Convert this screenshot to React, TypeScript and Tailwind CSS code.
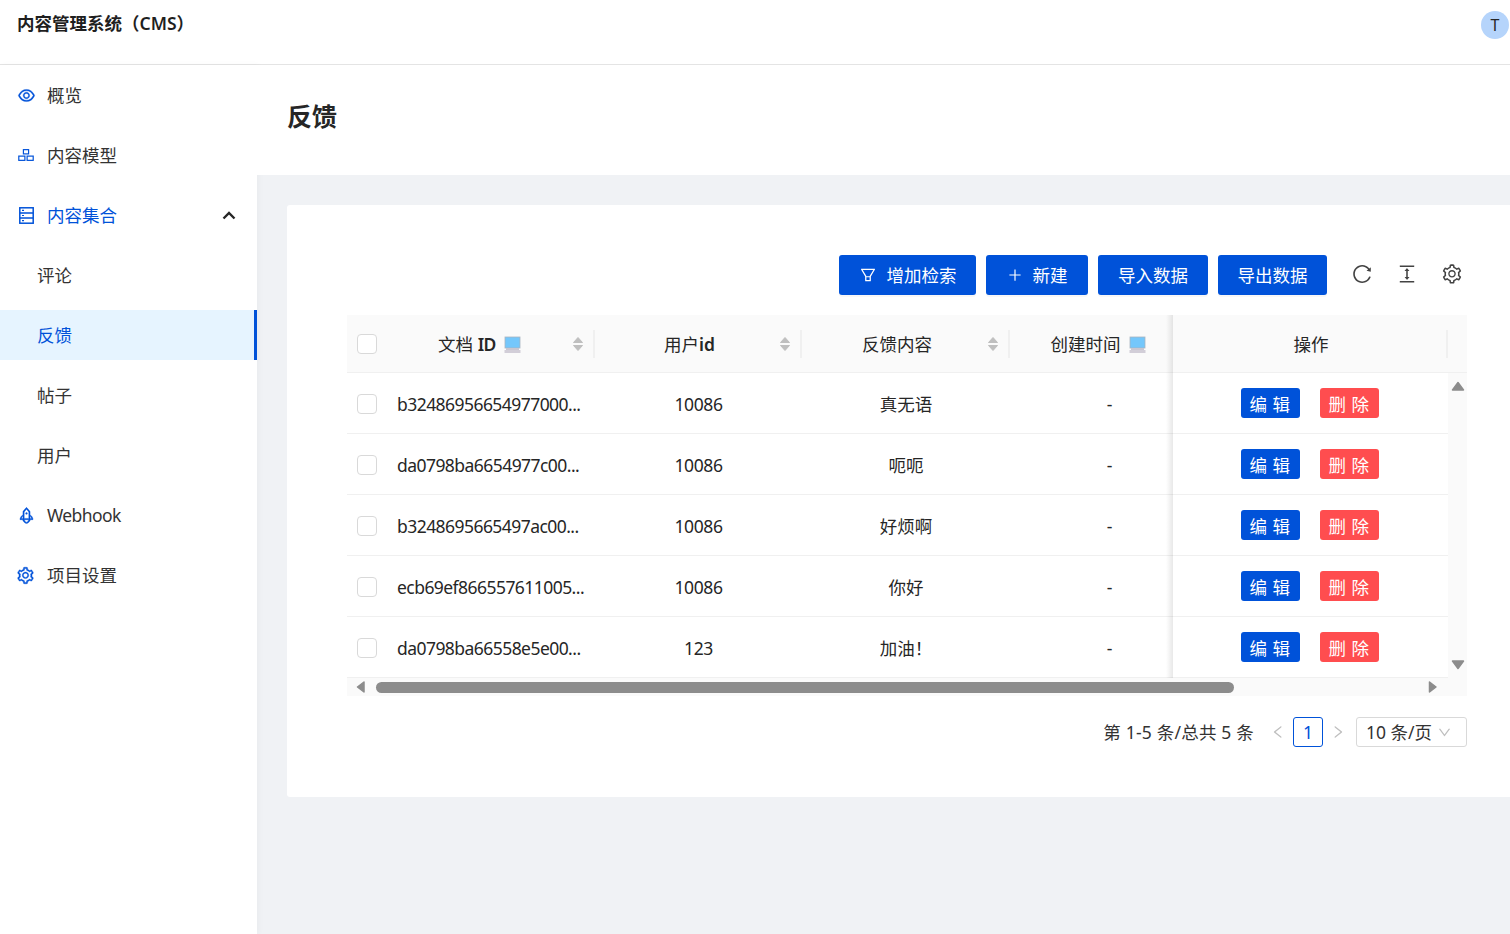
import {
  AiOutlineEye,
  AiOutlineRocket,
  AiOutlineSetting,
  AiOutlineDown,
  AiOutlineLeft,
  AiOutlineRight,
  AiOutlineFilter,
  AiOutlinePlus,
  AiOutlineReload,
  AiOutlineColumnHeight,
} from 'react-icons/ai';

const rows = [
  { id: 'b32486956654977000...', user: '10086', text: '真无语' },
  { id: 'da0798ba6654977c00...', user: '10086', text: '呃呃' },
  { id: 'b3248695665497ac00...', user: '10086', text: '好烦啊' },
  { id: 'ecb69ef866557611005...', user: '10086', text: '你好' },
  { id: 'da0798ba66558e5e00...', user: '123', text: '加油！' },
];

function Laptop() {
  return (
    <svg width="17" height="18" viewBox="0 0 17 18" className="shrink-0">
      <rect x="1" y="1" width="15" height="11" fill="#74c7fb" stroke="#a9b4c0" strokeWidth="0.8" />
      <rect x="2" y="12" width="13" height="2" fill="#c9c6d0" />
      <rect x="0.5" y="14" width="16" height="3" fill="#d2ced8" />
    </svg>
  );
}

function Sorter() {
  return (
    <svg width="12" height="16" viewBox="0 0 12 16" className="shrink-0">
      <path d="M6 1.5 L10.5 6.5 H1.5 Z" fill="#bfbfbf" stroke="#bfbfbf" strokeLinejoin="round" />
      <path d="M6 14.5 L10.5 9.5 H1.5 Z" fill="#bfbfbf" stroke="#bfbfbf" strokeLinejoin="round" />
    </svg>
  );
}

function Triangle({ dir, className }: { dir: 'up' | 'down' | 'left' | 'right'; className?: string }) {
  const d = {
    up: 'M7 1.5 L12.5 9 H1.5 Z',
    down: 'M7 9.5 L12.5 2 H1.5 Z',
    left: 'M2.5 7 L9 2 V12 Z',
    right: 'M9 7 L2.5 2 V12 Z',
  }[dir];
  const vertical = dir === 'up' || dir === 'down';
  return (
    <svg width={vertical ? 14 : 12} height={vertical ? 11 : 14} viewBox={vertical ? '0 0 14 11' : '0 0 12 14'} className={className}>
      <path d={d} fill="#8c8c8c" stroke="#8c8c8c" strokeWidth="1.5" strokeLinejoin="round" />
    </svg>
  );
}

function ModelIcon() {
  return (
    <svg width="16" height="12" viewBox="0 0 17 13" fill="none" stroke="#0052d9" strokeWidth="1.3" className="ml-[1px]">
      <rect x="5.7" y="0.7" width="5.6" height="4.6" />
      <rect x="0.7" y="7.7" width="6.6" height="4.6" />
      <rect x="9.7" y="7.7" width="6.6" height="4.6" />
    </svg>
  );
}

function CollectionIcon() {
  return (
    <svg width="15" height="17" viewBox="0 0 15 17" fill="none" stroke="#0052d9" strokeWidth="1.5" className="ml-[2px]">
      <rect x="0.8" y="0.8" width="13.4" height="15.4" />
      <path d="M1 6 H14 M1 11 H14" />
      <path d="M3 3.4 H5 M3 8.5 H5 M3 13.6 H5" strokeWidth="1.2" />
    </svg>
  );
}

function ChevronUp() {
  return (
    <svg width="14" height="9" viewBox="0 0 14 9" fill="none" stroke="#262626" strokeWidth="2.4" className="absolute right-[21px] top-[21px]">
      <path d="M1.5 7.5 L7 2 L12.5 7.5" />
    </svg>
  );
}

function Divider() {
  return <span className="w-[2px] h-[28px] bg-[#f0f0f0] shrink-0" />;
}

function Checkbox() {
  return <span className="block mt-[1px] w-[20px] h-[20px] rounded-[4px] border border-[#d9d9d9] bg-white" />;
}

function MenuItem({ icon, label, active, latin }: { icon: React.ReactNode; label: string; active?: boolean; latin?: boolean }) {
  return (
    <div className={`h-[50px] flex items-center pl-[17px] ${active ? 'text-[#0052d9]' : 'text-[#333]'}`}>
      <span className="w-[30px] flex items-center text-[#0052d9] text-[19px]">{icon}</span>
      <span className={`pt-[2px] ${latin ? 'tracking-[-0.6px]' : ''}`}>{label}</span>
    </div>
  );
}

function SubItem({ label, active }: { label: string; active?: boolean }) {
  return (
    <div
      className={`h-[50px] flex items-center pl-[37px] pt-[2px] ${
        active ? 'bg-[#e6f4ff] text-[#0052d9] border-r-[3px] border-[#0052d9]' : 'text-[#333]'
      }`}
    >
      {label}
    </div>
  );
}

function PrimaryButton({ className, children }: { className: string; children: React.ReactNode }) {
  return (
    <button className={`h-[40px] flex items-center justify-center gap-[10px] rounded-[3px] bg-[#0052d9] text-white shadow-[0_2px_0_rgba(0,0,0,0.03)] ${className}`}>
      {children}
    </button>
  );
}

export default function App() {
  return (
    <div
      className="h-screen overflow-hidden bg-[#f0f2f5] flex flex-col text-[17.5px] text-[#262626]"
      style={{ fontFamily: '"Noto Sans", "Noto Sans CJK SC", sans-serif' }}
    >
      <header className="h-[65px] shrink-0 bg-white border-b border-[#e4e4e4] flex justify-between pl-[17px] pr-[1px]">
        <div className="font-semibold leading-[46px] text-[#1f1f1f]">内容管理系统（CMS）</div>
        <div className="mt-[11px] w-[28px] h-[28px] rounded-full bg-[#b5d4fb] flex items-center justify-center text-[16px]">
          T
        </div>
      </header>

      <div className="flex flex-1 min-h-0">
        <aside className="w-[257px] shrink-0 bg-white shadow-[2px_0_6px_rgba(0,0,0,0.03)] py-[5px] flex flex-col gap-[10px] leading-none">
          <MenuItem icon={<AiOutlineEye stroke="currentColor" strokeWidth={20} />} label="概览" />
          <MenuItem icon={<ModelIcon />} label="内容模型" />
          <div className="relative">
            <MenuItem icon={<CollectionIcon />} label="内容集合" active />
            <ChevronUp />
          </div>
          <SubItem label="评论" />
          <SubItem label="反馈" active />
          <SubItem label="帖子" />
          <SubItem label="用户" />
          <MenuItem icon={<AiOutlineRocket stroke="currentColor" strokeWidth={20} />} label="Webhook" latin />
          <MenuItem icon={<AiOutlineSetting stroke="currentColor" strokeWidth={20} className="-ml-[1px]" />} label="项目设置" />
        </aside>

        <main className="flex-1 min-w-0 flex flex-col">
          <div className="h-[110px] bg-white pl-[30px] flex items-center">
            <h1 className="text-[25px] font-bold text-[#262626] pb-[6px]">反馈</h1>
          </div>

          <section className="mt-[30px] ml-[30px] bg-white rounded-l-[3px] pl-[60px] pr-[43px] pt-[50px] pb-[50px] h-[592px]">
            <div className="flex items-center justify-end gap-[10px] h-[40px]">
              <PrimaryButton className="w-[137px]">
                <AiOutlineFilter className="text-[18px]" />
                增加检索
              </PrimaryButton>
              <PrimaryButton className="w-[102px]">
                <AiOutlinePlus className="text-[16px]" />
                新建
              </PrimaryButton>
              <PrimaryButton className="w-[110px]">导入数据</PrimaryButton>
              <PrimaryButton className="w-[109px]">导出数据</PrimaryButton>
              <div className="flex items-center gap-[23px] ml-[14px] mr-[4px] pb-[2px] text-[22px] text-[#434343]">
                <AiOutlineReload />
                <AiOutlineColumnHeight />
                <AiOutlineSetting />
              </div>
            </div>

            <div className="relative mt-[20px] w-[1120px]">
              <div className="h-[58px] flex items-center bg-[#fafafa] border-b border-[#f0f0f0]">
                <div className="w-[40px] pl-[10px]">
                  <Checkbox />
                </div>
                <div className="w-[208px] flex items-center">
                  <div className="flex-1 flex items-center justify-center gap-[8px] pt-[2px]">
                    <span>
                      文档 <span className="font-semibold tracking-[-0.5px]">ID</span>
                    </span>
                    <Laptop />
                  </div>
                  <Sorter />
                  <span className="w-[9px]" />
                  <Divider />
                </div>
                <div className="w-[207px] flex items-center">
                  <div className="flex-1 text-center pl-[5px] pt-[2px]">
                    用户<span className="font-semibold">id</span>
                  </div>
                  <Sorter />
                  <span className="w-[9px]" />
                  <Divider />
                </div>
                <div className="w-[208px] flex items-center">
                  <div className="flex-1 text-center pl-[5px] pt-[2px]">反馈内容</div>
                  <Sorter />
                  <span className="w-[9px]" />
                  <Divider />
                </div>
                <div className="w-[163px] flex items-center justify-center gap-[8px] pl-[13px] pt-[2px]">
                  <span>创建时间</span>
                  <Laptop />
                </div>
                <div className="w-[275px] flex items-center">
                  <div className="flex-1 text-center pl-[3px] pt-[2px]">操作</div>
                  <Divider />
                </div>
              </div>

              <div className="flex">
                <div className="w-[1101px]">
                  {rows.map((r) => (
                    <div key={r.id} className="h-[61px] flex items-center border-b border-[#f0f0f0]">
                      <div className="w-[40px] pl-[10px]">
                        <Checkbox />
                      </div>
                      <div className="w-[208px] pl-[10px] pt-[2px] whitespace-nowrap tracking-[-0.55px]">{r.id}</div>
                      <div className="w-[207px] text-center pt-[2px] tracking-[-0.4px]">{r.user}</div>
                      <div className="w-[208px] text-center pt-[2px]">{r.text}</div>
                      <div className="w-[163px] text-center pl-[36px] pt-[2px]">-</div>
                      <div className="w-[275px] flex items-center justify-center gap-[20px] pr-[2px]">
                        <button className="w-[59px] h-[30px] pt-[2px] rounded-[3px] bg-[#0052d9] text-white tracking-[0.5px]">编 辑</button>
                        <button className="w-[59px] h-[30px] pt-[2px] rounded-[3px] bg-[#ff4d4f] text-white tracking-[0.5px]">删 除</button>
                      </div>
                    </div>
                  ))}
                </div>
                <div className="w-[19px] bg-[#fafafa] flex flex-col justify-between items-center py-[8px]">
                  <Triangle dir="up" />
                  <Triangle dir="down" />
                </div>
              </div>

              <div className="h-[18px] flex items-center bg-[#fafafa]">
                <Triangle dir="left" className="ml-[8px]" />
                <span className="ml-[9px] w-[858px] h-[11px] rounded-full bg-[#8c8c8c]" />
                <Triangle dir="right" className="ml-[193px]" />
              </div>

              {/* fixed column shadow */}
              <div className="absolute left-[819px] top-0 w-[7px] h-[363px] bg-[linear-gradient(to_left,rgba(0,0,0,0.09),transparent)]" />

              <div className="mt-[21px] h-[30px] flex items-center justify-end text-[#333]">
                <span className="tracking-[0.2px]">第 1-5 条/总共 5 条</span>
                <AiOutlineLeft className="ml-[16px] text-[16px] text-[#bfbfbf]" />
                <span className="ml-[7px] w-[30px] h-[30px] rounded-[3px] border border-[#0052d9] text-[#0052d9] flex items-center justify-center pt-[1px]">
                  1
                </span>
                <AiOutlineRight className="ml-[7px] text-[16px] text-[#bfbfbf]" />
                <div className="ml-[10px] w-[111px] h-[30px] rounded-[3px] border border-[#d9d9d9] flex items-center justify-between pl-[9px] pr-[14px]">
                  <span>10 条/页</span>
                  <AiOutlineDown className="text-[15px] text-[#bfbfbf]" />
                </div>
              </div>
            </div>
          </section>
        </main>
      </div>
    </div>
  );
}
